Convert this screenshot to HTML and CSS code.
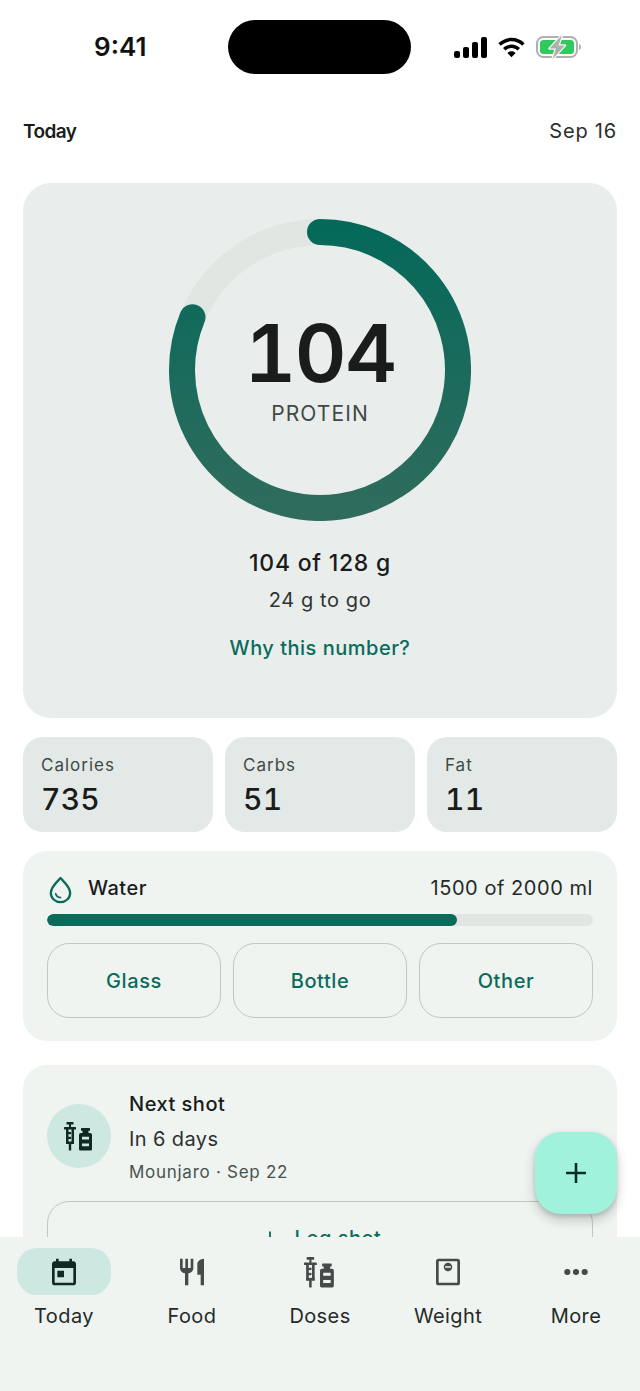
FILE: index.html
```html
<!DOCTYPE html>
<html lang="en">
<head>
<meta charset="utf-8">
<title>Today</title>
<link rel="stylesheet" href="styles.css">
</head>
<body>
<div class="phone">
  <div class="status">
    <span class="time">9:41</span>
    <div class="island"></div>
    <div class="sys">
      <svg class="sig" viewBox="0 0 33 21"><rect x="0" y="14" width="6" height="7" rx="2"/><rect x="9" y="10" width="6" height="11" rx="2"/><rect x="18" y="5" width="6" height="16" rx="2"/><rect x="27" y="0" width="6" height="21" rx="2"/></svg>
      <svg class="wifi" viewBox="0 0 28 21"><path d="M14 0.5c5.300 0 10 2.100 13.600 5.500l-2.500 2.600C22.100 5.800 18.200 4.100 14 4.100S5.900 5.800 2.900 8.600L.4 6C4 2.600 8.700.5 14 .5z"/><path d="M14 7.500c3.400 0 6.400 1.300 8.800 3.500l-2.500 2.600c-1.700-1.500-3.900-2.500-6.300-2.500s-4.600 1-6.300 2.500L5.200 11c2.400-2.200 5.400-3.500 8.800-3.500z"/><path d="M14 14.500c1.700 0 3.100.6 4.200 1.600L14 20.500l-4.200-4.400c1.100-1 2.500-1.600 4.200-1.600z"/></svg>
      <svg class="batt" viewBox="0 0 46 26"><rect x="1" y="3" width="40" height="20" rx="6.500" fill="none" stroke="#aeb0af" stroke-width="2"/><rect x="4" y="6" width="34" height="14" rx="3.500" fill="#2fc95c"/><path d="M43 10v6c1.300-.4 2-1.600 2-3s-.7-2.600-2-3z" fill="#aeb0af"/><path d="M26 1 13.500 14.500h6.500L16.500 25 29 11.500h-6.500z" fill="#aeb0af" stroke="#f6f8f6" stroke-width="2.500" paint-order="stroke" stroke-linejoin="round"/></svg>
    </div>
  </div>
  <main class="scroll">
    <div class="head"><span class="head-title">Today</span><span class="head-date">Sep 16</span></div>
    <section class="hero">
      <div class="ring">
        <svg class="ring-svg" viewBox="0 0 302 302">
          <defs><linearGradient id="rg" x1="0" y1="0" x2="0" y2="1"><stop offset="0" stop-color="#05695a"/><stop offset="1" stop-color="#2f6c5d"/></linearGradient></defs>
          <circle cx="151" cy="151" r="138" fill="none" stroke="#e1e6e2" stroke-width="26"/>
          <path d="M151 13A138 138 0 1 1 23.500 98.200" fill="none" stroke="url(#rg)" stroke-width="26" stroke-linecap="round"/>
        </svg>
        <div class="ring-text">
          <span class="big">104</span>
          <span class="ring-label">PROTEIN</span>
        </div>
      </div>
      <div class="hero-amount">104 of 128 g</div>
      <div class="hero-left">24 g to go</div>
      <div class="hero-link">Why this number?</div>
    </section>
    <section class="stats">
      <div class="stat"><span class="stat-label">Calories</span><span class="stat-value">735</span></div>
      <div class="stat"><span class="stat-label">Carbs</span><span class="stat-value">51</span></div>
      <div class="stat"><span class="stat-label">Fat</span><span class="stat-value">11</span></div>
    </section>
    <section class="water">
      <div class="water-head">
        <svg class="drop" viewBox="0 0 24 24"><path d="M12 2.500c3.200 3.300 8 7.600 8 12.300a8 7.700 0 0 1-16 0c0-4.700 4.800-9 8-12.300z" fill="none" stroke="#0b6b5b" stroke-width="1.900" stroke-linejoin="round"/><path d="M8 15.500c.5 1.800 2 3 4 3.200" fill="none" stroke="#0b6b5b" stroke-width="1.400" stroke-linecap="round"/></svg>
        <span class="water-title">Water</span>
        <span class="water-amt">1500 of 2000 ml</span>
      </div>
      <div class="bar"><div class="bar-fill" style="width:75%"></div></div>
      <div class="water-btns">
        <div class="btn">Glass</div>
        <div class="btn">Bottle</div>
        <div class="btn">Other</div>
      </div>
    </section>
    <section class="shot">
      <div class="shot-row">
        <div class="avatar">
          <svg class="ic-dose" viewBox="0 0 30 30"><use href="#dose"/></svg>
        </div>
        <div class="shot-text">
          <span class="shot-title">Next shot</span>
          <span class="shot-when">In 6 days</span>
          <span class="shot-sub">Mounjaro · Sep 22</span>
        </div>
      </div>
      <div class="log">
        <svg class="log-plus" viewBox="0 0 24 24"><path d="M19 13h-6v6h-2v-6H5v-2h6V5h2v6h6z"/></svg>
        <span>Log shot</span>
      </div>
    </section>
  </main>
  <button class="fab" aria-label="Add"><svg viewBox="0 0 24 24"><path d="M19 12.900h-6.100V19h-1.800v-6.100H5v-1.800h6.100V5h1.800v6.100H19z"/></svg></button>
  <nav class="nav">
    <div class="tab active">
      <div class="pill"><svg viewBox="0 0 24 24"><path d="M19 4h-1V2h-2v2H8V2H6v2H5c-1.100 0-2 .9-2 2v14c0 1.100.9 2 2 2h14c1.100 0 2-.9 2-2V6c0-1.100-.9-2-2-2zm0 16H5V9h14v11zM7 11h5v5H7z"/></svg></div>
      <span class="tab-label">Today</span>
    </div>
    <div class="tab">
      <div class="pill"><svg viewBox="0 0 24 24"><path d="M11 9H9V2H7v7H5V2H3v7c0 2.120 1.660 3.840 3.750 3.970V22h2.500v-9.030C11.340 12.840 13 11.120 13 9V2h-2v7zm5-3v8h2.500v8H21V2c-2.760 0-5 2.240-5 4z"/></svg></div>
      <span class="tab-label">Food</span>
    </div>
    <div class="tab">
      <div class="pill"><svg viewBox="0 0 30 30"><g id="dose"><rect x="2.500" y="1" width="7" height="2.500" rx=".5"/><rect x="5" y="1" width="2" height="6"/><rect x="0" y="6" width="12" height="2.500" rx=".5"/><rect x="2" y="7" width="2.500" height="16"/><rect x="7.500" y="7" width="2.500" height="16"/><rect x="2" y="20.500" width="8" height="2.500"/><rect x="4" y="11" width="3" height="2.200"/><rect x="4" y="15.800" width="3" height="2.200"/><rect x="4.800" y="22" width="2.400" height="7.500" rx=".5"/><rect x="17" y="7" width="9" height="2.800" rx=".5"/><rect x="18.500" y="9" width="6" height="4"/><path fill-rule="evenodd" d="M17 12h9c1.200 0 2 .8 2 2v14c0 1-.8 1.500-1.500 1.500h-10c-.8 0-1.500-.5-1.500-1.500V14c0-1.200.8-2 2-2zM18 15.800v2.700h7v-2.700zM18 22.500v2.700h7v-2.700z"/></g></svg></div>
      <span class="tab-label">Doses</span>
    </div>
    <div class="tab">
      <div class="pill"><svg viewBox="0 0 24 24"><path fill-rule="evenodd" d="M5 2h14a2 2 0 0 1 2 2v16a2 2 0 0 1-2 2H5a2 2 0 0 1-2-2V4a2 2 0 0 1 2-2zm0 2v16h14V4z"/><path fill-rule="evenodd" d="M12 5a3.200 3.200 0 1 1 0 6.400A3.200 3.200 0 0 1 12 5zM9.800 7.600v1.200h4.400V7.600z"/></svg></div>
      <span class="tab-label">Weight</span>
    </div>
    <div class="tab">
      <div class="pill"><svg viewBox="0 0 24 24"><circle cx="5.500" cy="12" r="2.300"/><circle cx="12" cy="12" r="2.300"/><circle cx="18.500" cy="12" r="2.300"/></svg></div>
      <span class="tab-label">More</span>
    </div>
  </nav>
</div>
</body>
</html>
```

FILE: styles.css
```css
* { box-sizing: border-box; }
html, body { margin: 0; padding: 0; background: #fff; }
body { font-family: Inter, "Liberation Sans", sans-serif; font-optical-sizing: none; color: #191c1b; }
.phone { position: relative; width: 640px; height: 1391px; overflow: hidden; display: flex; flex-direction: column; background: #fff; }

.status { flex: none; height: 94px; display: flex; align-items: flex-start; padding-top: 20px; position: relative; }
.time { position: absolute; left: 94px; top: 31px; font-size: 26px; line-height: 32px; font-weight: 600; color: #111; }
.island { width: 183px; height: 54px; margin-left: 228px; border-radius: 27px; background: #000; }
.sys { position: absolute; left: 454px; top: 34px; display: flex; align-items: center; gap: 11px; }
.sig { width: 33px; height: 21px; fill: #000; }
.wifi { width: 27px; height: 21px; fill: #000; }
.batt { width: 46px; height: 26px; }

.scroll { flex: 1 1 auto; min-height: 0; overflow: hidden; padding: 0 23px; display: flex; flex-direction: column; }
.head { flex: none; display: flex; justify-content: space-between; align-items: center; height: 40px; margin-top: 17px; }
.head-title { font-size: 19px; font-weight: 600; letter-spacing: -0.6px; color: #191c1b; }
.head-date { font-size: 20px; letter-spacing: .8px; color: #2a2e2d; }

.hero { flex: none; height: 535px; margin-top: 32px; background: #e9eeed; border-radius: 28px; display: flex; flex-direction: column; align-items: center; padding-top: 36px; }
.ring { position: relative; width: 302px; height: 302px; flex: none; }
.ring-svg { display: block; width: 302px; height: 302px; }
.ring-text { position: absolute; inset: 0; display: flex; flex-direction: column; align-items: center; }
.big { margin-top: 88px; font-size: 80px; line-height: 92px; font-weight: 600; font-variant-numeric: tabular-nums; letter-spacing: -1.500px; color: #191c1b; }
.ring-label { margin-top: 3px; font-size: 21px; line-height: 24px; letter-spacing: 1.100px; color: #3f4946; }
.hero-amount { margin-top: 27px; font-size: 23px; line-height: 30px; font-weight: 500; letter-spacing: .75px; color: #191c1b; }
.hero-left { margin-top: 8px; font-size: 20px; line-height: 28px; letter-spacing: .6px; color: #2f3432; }
.hero-link { margin-top: 20px; font-size: 20px; line-height: 28px; font-weight: 500; letter-spacing: .5px; color: #0b6b5b; }

.stats { flex: none; display: grid; grid-template-columns: repeat(3, 190px); gap: 12px; margin-top: 19px; }
.stat { height: 95px; background: #e3e9e6; border-radius: 20px; padding: 17px 18px 0; display: flex; flex-direction: column; }
.stat-label { font-size: 17px; line-height: 22px; letter-spacing: 1px; color: #3f4946; }
.stat-value { margin-top: 5px; font-size: 30px; line-height: 36px; font-weight: 500; font-variant-numeric: tabular-nums; letter-spacing: .2px; color: #191c1b; }

.water { flex: none; height: 190px; margin-top: 19px; background: #eff4f1; border-radius: 24px; padding: 20px 24px 0; display: flex; flex-direction: column; }
.water-head { display: flex; align-items: center; height: 34px; }
.drop { width: 29px; height: 29px; margin-left: -1px; margin-right: 13px; margin-top: 2px; flex: none; }
.water-title { font-size: 20px; font-weight: 500; letter-spacing: .5px; color: #191c1b; }
.water-amt { margin-left: auto; font-size: 20px; letter-spacing: .55px; color: #252a28; }
.bar { height: 12px; margin-top: 9px; border-radius: 6px; background: #e1e6e2; overflow: hidden; flex: none; }
.bar-fill { height: 100%; border-radius: 6px; background: #0b6b5b; }
.water-btns { display: grid; grid-template-columns: 174px 174px 174px; gap: 12px; margin-top: 17px; }
.btn { height: 75px; border: 1.500px solid #bfc9c4; border-radius: 22px; display: flex; align-items: center; justify-content: center; font-size: 20px; font-weight: 500; letter-spacing: .6px; color: #0b6b5b; }

.shot { flex: none; height: 230px; margin-top: 24px; background: #eff4f1; border-radius: 24px 24px 0 0; padding: 22px 24px 0; }
.shot-row { display: flex; align-items: center; gap: 18px; height: 99px; }
.avatar { width: 64px; height: 64px; border-radius: 50%; background: #cde8e0; display: flex; align-items: center; justify-content: center; flex: none; margin-bottom: 2px; }
.ic-dose { width: 30px; height: 30px; fill: #0f2a25; }
.shot-text { display: flex; flex-direction: column; }
.shot-title { font-size: 20px; line-height: 30px; font-weight: 500; letter-spacing: .5px; color: #191c1b; }
.shot-when { font-size: 20px; line-height: 28px; margin-top: 6px; letter-spacing: .4px; color: #2b302e; }
.shot-sub { font-size: 17px; line-height: 24px; margin-top: 7px; letter-spacing: .72px; color: #4a524f; }
.log { margin-top: 15px; height: 74px; border: 1.500px solid #bfc9c4; border-radius: 22px; display: flex; align-items: center; justify-content: center; gap: 14px; font-size: 20px; font-weight: 500; letter-spacing: .5px; color: #0b6b5b; }
.log-plus { width: 22px; height: 22px; fill: #0b6b5b; }

.fab { position: absolute; left: 535px; top: 1132px; width: 82px; height: 82px; border: 0; padding: 0; border-radius: 26px; background: #a0f2dc; box-shadow: 0 6px 12px rgba(0,0,0,.2), 0 2px 4px rgba(0,0,0,.12); display: flex; align-items: center; justify-content: center; z-index: 2; }
.fab svg { width: 34px; height: 34px; fill: #0c2a24; }

.nav { flex: none; height: 154px; background: #eff4f1; display: grid; grid-template-columns: repeat(5, 1fr); padding-top: 11px; position: relative; z-index: 1; }
.tab { display: flex; flex-direction: column; align-items: center; }
.pill { width: 94px; height: 47px; border-radius: 20px; display: flex; align-items: center; justify-content: center; }
.active .pill { background: #cde8e0; }
.pill svg { width: 32px; height: 32px; fill: #454b49; }
.active .pill svg { fill: #0f2a25; }
.tab-label { margin-top: 7px; font-size: 20px; line-height: 28px; letter-spacing: .4px; color: #252a28; }
```
